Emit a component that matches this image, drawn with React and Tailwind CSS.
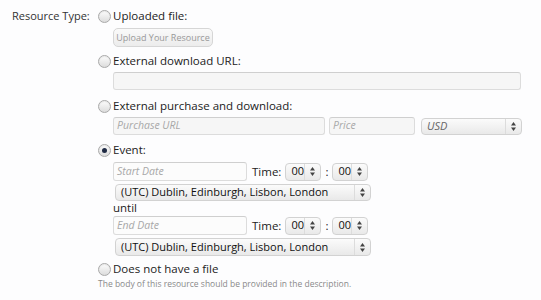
import React from "react";

const font = { fontFamily: '"Open Sans", "DejaVu Sans", sans-serif' };

function Radio({ checked }) {
  return (
    <span className="inline-flex h-[13px] w-[13px] shrink-0 items-center justify-center rounded-full border border-[#a9a9a9] bg-gradient-to-b from-[#fdfdfd] to-[#dcdcdc] shadow-[inset_0_1px_1px_rgba(0,0,0,0.08)]">
      {checked && <span className="h-[5px] w-[5px] rounded-full bg-[#1f2a44]" />}
    </span>
  );
}

function Option({ checked, label }) {
  return (
    <div className="flex h-[16px] items-center text-[11.5px] text-[#222]">
      <Radio checked={checked} />
      <span className="ml-[2px] whitespace-nowrap">{label}</span>
    </div>
  );
}

function Arrows() {
  return (
    <svg width="7" height="11" viewBox="0 0 7 11" className="shrink-0">
      <path d="M3.5 1 L6 4.5 L1 4.5 Z" fill="#444" />
      <path d="M3.5 10 L6 6.5 L1 6.5 Z" fill="#444" />
    </svg>
  );
}

function Select({ children, className, italic }) {
  return (
    <div className={"flex items-center justify-between rounded-[4px] border border-[#d2d2d2] bg-gradient-to-b from-[#fbfbfb] to-[#e9e9e9] pl-[5px] pr-[4px] text-[11px] " + (className || "")}>
      <span className={"whitespace-nowrap " + (italic ? "italic text-[#666]" : "text-[#111]")}>{children}</span>
      <span className="flex h-full items-center border-l border-[#dcdcdc] pl-[4px]">
        <Arrows />
      </span>
    </div>
  );
}

function Input({ placeholder, className }) {
  return (
    <div className={"flex items-center rounded-[3px] border border-[#dcdcdc] border-t-[#cfcfcf] bg-[#f6f6f6] px-[3px] text-[10.5px] italic text-[#a8a8a8] " + (className || "")}>
      {placeholder}
    </div>
  );
}

function TimeRow({ placeholder }) {
  return (
    <div className="flex h-[19px] items-center">
      <Input placeholder={placeholder} className="h-[19px] w-[134px] bg-[#fcfcfc]" />
      <span className="ml-[5px] text-[11.5px] text-[#222]">Time:</span>
      <Select className="ml-[4px] h-[18px] w-[36px]">00</Select>
      <span className="mx-[4px] text-[11.5px] text-[#222]">:</span>
      <Select className="h-[18px] w-[36px]">00</Select>
    </div>
  );
}

export default function App() {
  return (
    <div className="h-[300px] w-[541px] bg-[#fdfdfe]" style={font}>
      <div className="flex pt-[8px]">
        <div className="w-[98px] shrink-0 whitespace-nowrap pl-[12px] text-[11px] leading-[16px] text-[#333]">Resource Type:</div>
        <div className="flex flex-col">
          <Option label="Uploaded file:" />
          <div className="ml-[15px] mt-[4px] flex h-[19px] w-[100px] items-center justify-center whitespace-nowrap rounded-[5px] border border-[#d6d6d6] bg-gradient-to-b from-[#fafafa] to-[#ececec] text-[9px] text-[#999]">
            Upload Your Resource
          </div>

          <div className="mt-[6px]"><Option label="External download URL:" /></div>
          <Input className="ml-[15px] mt-[3px] h-[18px] w-[408px]" />

          <div className="mt-[8px]"><Option label="External purchase and download:" /></div>
          <div className="ml-[15px] mt-[3px] flex h-[18px] items-center">
            <Input placeholder="Purchase URL" className="h-[18px] w-[212px]" />
            <Input placeholder="Price" className="ml-[4px] h-[18px] w-[86px]" />
            <Select italic className="ml-[6px] h-[17px] w-[101px]">USD</Select>
          </div>

          <div className="mt-[7px]"><Option checked label="Event:" /></div>
          <div className="ml-[15px] mt-[4px]">
            <TimeRow placeholder="Start Date" />
            <Select className="ml-[2px] mt-[3px] h-[17px] w-[256px]">(UTC) Dublin, Edinburgh, Lisbon, London</Select>
            <div className="h-[13px] text-[11.5px] leading-[13px] text-[#222]">until</div>
            <div className="mt-[2px]"><TimeRow placeholder="End Date" /></div>
            <Select className="ml-[2px] mt-[3px] h-[18px] w-[256px]">(UTC) Dublin, Edinburgh, Lisbon, London</Select>
          </div>

          <div className="mt-[5px]"><Option label="Does not have a file" /></div>
          <div className="mt-[1px] whitespace-nowrap text-[8.5px] leading-[12px] text-[#8a8a8a]">The body of this resource should be provided in the description.</div>
        </div>
      </div>
    </div>
  );
}
